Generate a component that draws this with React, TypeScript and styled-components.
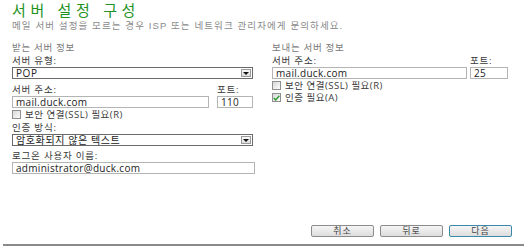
import { FC, ReactNode } from 'react';
import styled, { createGlobalStyle } from 'styled-components';

const GlobalStyle = createGlobalStyle`
    html, body {
        margin: 0;
        padding: 0;
        background: #ffffff;
    }
    body {
        font-family: 'Open Sans', 'Noto Sans CJK KR', sans-serif;
        color: #333333;
    }
`;

const Page = styled.div`
    width: 528px;
    height: 249px;
    box-sizing: border-box;
    display: flex;
    flex-direction: column;
    padding-bottom: 3px;
    overflow: hidden;
`;

const Header = styled.div`
    padding: 1px 0 0 12px;
`;

const Title = styled.h1`
    margin: 0;
    font-family: 'Liberation Sans', 'Noto Sans CJK KR', sans-serif;
    font-size: 15px;
    line-height: 20px;
    font-weight: 400;
    letter-spacing: 4.6px;
    color: #1f921f;
`;

const Subtitle = styled.div`
    margin-top: -1px;
    font-family: 'Liberation Sans', 'Noto Sans CJK KR', sans-serif;
    font-size: 9.5px;
    line-height: 11px;
    letter-spacing: 1.1px;
    color: #8a8a8a;
`;

const Columns = styled.div`
    display: grid;
    grid-template-columns: 241px 236px;
    column-gap: 19px;
    margin-top: 10px;
    padding-left: 12px;
`;

const Column = styled.section`
    display: flex;
    flex-direction: column;
`;

const SectionTitle = styled.div`
    font-family: 'Noto Sans CJK KR', sans-serif;
    font-size: 9.5px;
    line-height: 12px;
    letter-spacing: 0.8px;
    color: #7a7a7a;
`;

const Label = styled.div<{ $gap?: number }>`
    margin-top: ${p => p.$gap ?? 2}px;
    font-size: 9.5px;
    line-height: 12px;
    letter-spacing: 0.8px;
    color: #3a3a3a;
`;

const FieldRow = styled.div<{ $gap?: number }>`
    display: grid;
    grid-template-columns: 1fr ${p => (p.$gap ? 38 : 36)}px;
    column-gap: ${p => p.$gap ?? 8}px;
`;

const FieldStack = styled.div`
    display: flex;
    flex-direction: column;
`;

const TextBox = styled.div<{ $wide?: boolean }>`
    height: 12px;
    box-sizing: border-box;
    border: 1px solid #b4b4b4;
    background: #ffffff;
    padding: 0 3px;
    font-size: 10px;
    line-height: 10px;
    letter-spacing: 0.3px;
    color: #222222;
    white-space: nowrap;
    overflow: hidden;
    ${p => p.$wide && 'margin-right: -2px;'}
`;

const SelectBox = styled.div`
    height: 12px;
    box-sizing: border-box;
    border: 1px solid #6b6b6b;
    background: #ffffff;
    padding: 0 1px 0 3px;
    display: flex;
    align-items: center;
    justify-content: space-between;
    font-size: 10px;
    line-height: 10px;
    letter-spacing: 0.6px;
    color: #222222;
`;

const SelectArrow = styled.span`
    width: 10px;
    height: 8px;
    box-sizing: border-box;
    border: 1px solid #9a9a9a;
    background: linear-gradient(#fafafa, #dcdcdc);
    display: flex;
    align-items: center;
    justify-content: center;

    &::after {
        content: '';
        border-left: 3px solid transparent;
        border-right: 3px solid transparent;
        border-top: 3px solid #111111;
    }
`;

const CheckRow = styled.label`
    display: flex;
    align-items: center;
    gap: 4px;
    height: 11px;
    margin-top: 1px;
    font-size: 9.5px;
    line-height: 11px;
    letter-spacing: 0.5px;
    color: #3a3a3a;
`;

const CheckBox = styled.span`
    width: 9px;
    height: 9px;
    box-sizing: border-box;
    border: 1px solid #8f8f8f;
    background: linear-gradient(135deg, #d8d8d8, #fbfbfb);
    display: flex;
    align-items: center;
    justify-content: center;
`;

const Footer = styled.div`
    margin-top: auto;
    display: flex;
    flex-direction: column;
`;

const ButtonRow = styled.div`
    display: flex;
    justify-content: flex-end;
    gap: 6px;
    padding-right: 16px;
`;

const Button = styled.button<{ $primary?: boolean }>`
    width: 63px;
    height: 12px;
    padding: 0;
    border-radius: 2px;
    border: 1px solid ${p => (p.$primary ? '#3c88a8' : '#8c8c8c')};
    background: linear-gradient(#f6f6f6, #dddddd);
    font-family: 'Noto Sans CJK KR', sans-serif;
    font-size: 9px;
    line-height: 10px;
    letter-spacing: 1px;
    color: #444444;
`;

const Rule = styled.div`
    height: 2px;
    margin: 7px 4px 0 3px;
    background: #8a8a8a;
`;

const Check: FC<{ checked?: boolean; children: ReactNode }> = ({ checked, children }) => (
    <CheckRow>
        <CheckBox>
            {checked && (
                <svg width="7" height="6" viewBox="0 0 7 6">
                    <path d="M0.8 3 L2.7 5 L6.3 0.8" fill="none" stroke="#2f9a2f" strokeWidth="1.4" />
                </svg>
            )}
        </CheckBox>
        {children}
    </CheckRow>
);

const Select: FC<{ value: string }> = ({ value }) => (
    <SelectBox>
        <span>{value}</span>
        <SelectArrow />
    </SelectBox>
);

export default function App() {
    return (
        <>
            <GlobalStyle />
            <Page>
                <Header>
                    <Title>서버 설정 구성</Title>
                    <Subtitle>메일 서버 설정을 모르는 경우 ISP 또는 네트워크 관리자에게 문의하세요.</Subtitle>
                </Header>
                <Columns>
                    <Column>
                        <SectionTitle>받는 서버 정보</SectionTitle>
                        <Label>서버 유형:</Label>
                        <Select value="POP" />
                        <FieldRow>
                            <FieldStack>
                                <Label $gap={5}>서버 주소:</Label>
                                <TextBox>mail.duck.com</TextBox>
                            </FieldStack>
                            <FieldStack>
                                <Label $gap={5}>포트:</Label>
                                <TextBox>110</TextBox>
                            </FieldStack>
                        </FieldRow>
                        <Check>보안 연결(SSL) 필요(R)</Check>
                        <Label>인증 방식:</Label>
                        <Select value="암호화되지 않은 텍스트" />
                        <Label $gap={4}>로그온 사용자 이름:</Label>
                        <TextBox $wide>administrator@duck.com</TextBox>
                    </Column>
                    <Column>
                        <SectionTitle>보내는 서버 정보</SectionTitle>
                        <FieldRow $gap={3}>
                            <FieldStack>
                                <Label>서버 주소:</Label>
                                <TextBox>mail.duck.com</TextBox>
                            </FieldStack>
                            <FieldStack>
                                <Label>포트:</Label>
                                <TextBox>25</TextBox>
                            </FieldStack>
                        </FieldRow>
                        <Check>보안 연결(SSL) 필요(R)</Check>
                        <Check checked>인증 필요(A)</Check>
                    </Column>
                </Columns>
                <Footer>
                    <ButtonRow>
                        <Button>취소</Button>
                        <Button>뒤로</Button>
                        <Button $primary>다음</Button>
                    </ButtonRow>
                    <Rule />
                </Footer>
            </Page>
        </>
    );
}
